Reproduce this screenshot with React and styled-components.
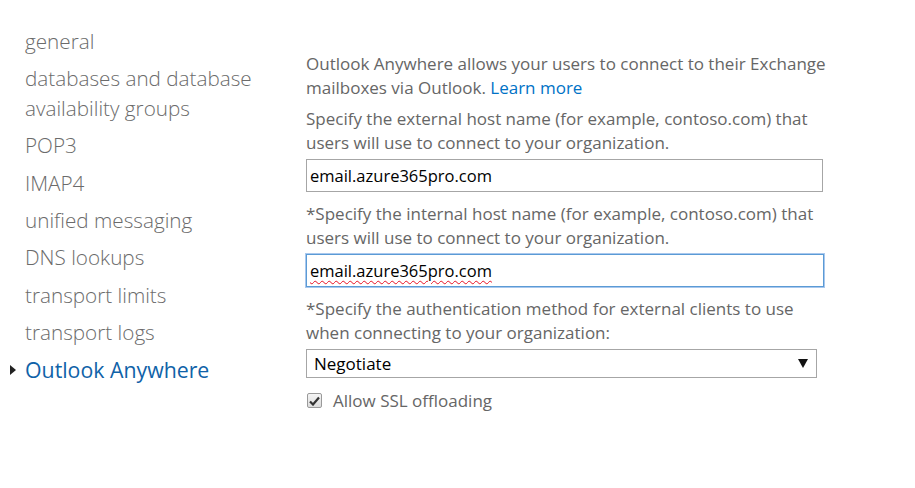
import React from 'react';
import styled, { createGlobalStyle } from 'styled-components';

const GlobalStyle = createGlobalStyle`
  body {
    margin: 0;
    background: #ffffff;
    font-family: "Open Sans", "Noto Sans", sans-serif;
  }
`;

const Page = styled.div`
  display: flex;
  width: 915px;
  height: 488px;
  box-sizing: border-box;
  padding-top: 27px;
`;

const Nav = styled.ul`
  list-style: none;
  margin: -1.5px 0 0;
  padding: 0 0 0 25px;
  width: 306px;
  flex-shrink: 0;
  box-sizing: border-box;
`;

const NavItem = styled.li`
  position: relative;
  font-size: ${(p) => (p.active ? '21.3px' : '20.7px')};
  font-weight: ${(p) => (p.active ? 400 : 300)};
  line-height: 30px;
  margin-bottom: 7.4px;
  color: ${(p) => (p.active ? '#0f62a8' : '#6b6b6b')};
  width: 240px;

  &::before {
    content: '';
    display: ${(p) => (p.active ? 'block' : 'none')};
    position: absolute;
    left: -15px;
    top: 10px;
    border-left: 6px solid #222;
    border-top: 5px solid transparent;
    border-bottom: 5px solid transparent;
  }
`;

const Content = styled.div`
  display: flex;
  flex-direction: column;
  padding-top: 25px;
  width: 524px;
`;

const Para = styled.p`
  margin: 0 0 ${(p) => p.gap}px;
  font-size: 17px;
  line-height: 24px;
  color: #666666;
`;

const Link = styled.a`
  color: #0072c6;
  text-decoration: none;
`;

const TextBox = styled.div`
  box-sizing: border-box;
  width: ${(p) => p.width}px;
  height: 33px;
  border: 1px solid ${(p) => (p.focused ? '#5b9bd5' : '#a6a6a6')};
  box-shadow: ${(p) => (p.focused ? '0 0 0 1px #a9c8ee' : 'none')};
  padding: 0 3px;
  display: flex;
  align-items: center;
  font-size: 16.5px;
  color: #000;
  margin-bottom: ${(p) => p.gap}px;
`;

const Squiggle = styled.span`
  text-decoration: underline wavy #e81123;
  text-decoration-thickness: 1px;
  text-underline-offset: 3px;
`;

const Select = styled.div`
  box-sizing: border-box;
  width: 511px;
  height: 29px;
  border: 1px solid #a6a6a6;
  display: flex;
  align-items: center;
  justify-content: space-between;
  padding: 0 8px 0 7px;
  font-size: 17px;
  color: #000;
  margin-bottom: 11px;
`;

const Arrow = styled.span`
  width: 0;
  height: 0;
  border-top: 9px solid #111;
  border-left: 5px solid transparent;
  border-right: 5px solid transparent;
`;

const CheckRow = styled.label`
  display: flex;
  align-items: center;
  gap: 11px;
  font-size: 17px;
  color: #666666;
  padding-left: 1px;
`;

const CheckBox = styled.span`
  box-sizing: border-box;
  width: 15px;
  height: 15px;
  border: 1px solid #9a9a9a;
  border-radius: 2px;
  background: linear-gradient(#f4f4f4, #dcdcdc);
  display: flex;
  align-items: center;
  justify-content: center;
`;

export default function App() {
  const navItems = [
    'general',
    'databases and database availability groups',
    'POP3',
    'IMAP4',
    'unified messaging',
    'DNS lookups',
    'transport limits',
    'transport logs',
    'Outlook Anywhere',
  ];

  return (
    <>
      <GlobalStyle />
      <Page>
        <Nav>
          {navItems.map((item) => (
            <NavItem key={item} active={item === 'Outlook Anywhere'}>
              {item}
            </NavItem>
          ))}
        </Nav>
        <Content>
          <Para gap={7}>
            Outlook Anywhere allows your users to connect to their Exchange mailboxes via Outlook.{' '}
            <Link href="#">Learn more</Link>
          </Para>
          <Para gap={4}>
            Specify the external host name (for example, contoso.com) that users will use to connect to your organization.
          </Para>
          <TextBox width={517} gap={10}>email.azure365pro.com</TextBox>
          <Para gap={4}>
            *Specify the internal host name (for example, contoso.com) that users will use to connect to your organization.
          </Para>
          <TextBox width={518} gap={10} focused>
            <Squiggle>email.azure365pro.com</Squiggle>
          </TextBox>
          <Para gap={4}>
            *Specify the authentication method for external clients to use when connecting to your organization:
          </Para>
          <Select>
            <span>Negotiate</span>
            <Arrow />
          </Select>
          <CheckRow>
            <CheckBox>
              <svg width="11" height="10" viewBox="0 0 11 10">
                <path d="M1 5.5 L4 8.5 L10 1.5" fill="none" stroke="#333" strokeWidth="2.2" />
              </svg>
            </CheckBox>
            Allow SSL offloading
          </CheckRow>
        </Content>
      </Page>
    </>
  );
}
